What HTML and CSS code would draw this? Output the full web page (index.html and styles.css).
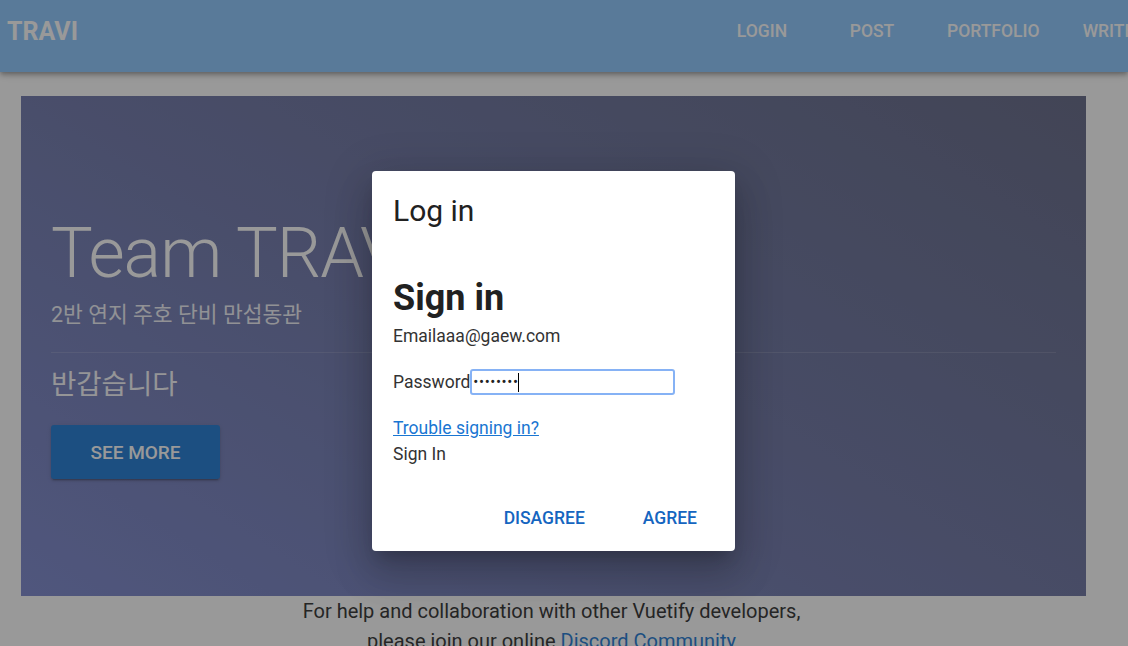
FILE: index.html
```html
<!DOCTYPE html>
<html lang="ko">
<head>
<meta charset="utf-8">
<title>TRAVI</title>
<link rel="stylesheet" href="styles.css">
</head>
<body>
<div class="app">
  <header class="toolbar">
    <div class="toolbar-inner">
      <div class="brand">TRAVI</div>
      <nav class="nav">
        <a class="nav-btn">LOGIN</a>
        <a class="nav-btn">POST</a>
        <a class="nav-btn">PORTFOLIO</a>
        <a class="nav-btn">WRITE</a>
      </nav>
    </div>
  </header>

  <main class="main">
    <section class="hero">
      <h1 class="hero-title">Team TRAVI</h1>
      <div class="hero-sub">2반 연지 주호 단비 만섭동관</div>
      <hr class="hero-divider">
      <div class="hero-greet">반갑습니다</div>
      <button class="hero-btn">SEE MORE</button>
    </section>
    <p class="help">For help and collaboration with other Vuetify developers,<br>please join our online <a class="help-link">Discord Community</a></p>
  </main>

  <div class="overlay"></div>

  <div class="dialog">
    <div class="dialog-title">Log in</div>
    <div class="dialog-body">
      <h2 class="signin">Sign in</h2>
      <div class="field-line">Emailaaa@gaew.com</div>
      <div class="pw-row">
        <span class="pw-label">Password</span>
        <span class="pw-input"><span class="pw-dots">••••••••</span><span class="caret"></span></span>
      </div>
      <a class="trouble">Trouble signing in?</a>
      <div class="field-line">Sign In</div>
    </div>
    <div class="dialog-actions">
      <button class="act-btn">DISAGREE</button>
      <button class="act-btn">AGREE</button>
    </div>
  </div>
</div>
</body>
</html>
```

FILE: styles.css
```css
* { box-sizing: border-box; }
html, body { margin: 0; padding: 0; }
body {
  font-family: Roboto, "Noto Sans CJK KR", "Noto Sans", sans-serif;
  background: #ffffff;
  color: #212121;
  width: 1128px;
  height: 646px;
  overflow: hidden;
}
.app {
  position: relative;
  width: 1128px;
  height: 646px;
  overflow: hidden;
}

/* toolbar */
.toolbar {
  height: 72px;
  background: #8ac6ff;
  box-shadow: 0 2px 4px -1px rgba(0,0,0,.25), 0 4px 5px 0 rgba(0,0,0,.16), 0 1px 10px 0 rgba(0,0,0,.12);
  position: relative;
  z-index: 1;
  overflow: hidden;
}
.toolbar-inner {
  height: 62px;
  display: flex;
  align-items: center;
  padding-left: 7px;
  white-space: nowrap;
}
.brand {
  color: #ffffff;
  font-size: 25px;
  font-weight: 700;
  flex: 0 0 auto;
}
.nav {
  display: flex;
  flex: 0 0 auto;
  margin-left: 628px;
}
.nav-btn {
  min-width: 112px;
  padding: 0 16px;
  text-align: center;
  color: #ffffff;
  font-size: 17.5px;
  font-weight: 500;
  line-height: 36px;
}
.nav-btn:nth-child(2) { margin-left: -2px; }
.nav-btn:nth-child(3) { margin-left: 3px; }
.nav-btn:nth-child(4) { margin-left: -3px; }

/* main */
.main {
  padding: 24px 42px 0 21px;
}
.hero {
  height: 500px;
  padding: 121px 30px 0;
  background: linear-gradient(32deg, #7884cc 0%, #6b74a8 45%, #5f6483 100%);
  color: #ffffff;
}
.hero-title {
  margin: 0;
  font-size: 70px;
  font-weight: 300;
  line-height: 72px;
  letter-spacing: -1px;
}
.hero-sub {
  margin-top: 11px;
  font-size: 21.5px;
  line-height: 30px;
  opacity: .9;
}
.hero-divider {
  margin: 22px 0 0;
  border: 0;
  border-top: 1px solid rgba(255,255,255,.14);
}
.hero-greet {
  margin-top: 13px;
  font-size: 27.5px;
  line-height: 38px;
  opacity: .95;
}
.hero-btn {
  margin-top: 21px;
  width: 169px;
  height: 54px;
  border: 0;
  border-radius: 3px;
  background: #1976d2;
  color: #ffffff;
  font-family: Roboto, sans-serif;
  font-size: 19px;
  font-weight: 500;
  box-shadow: 0 3px 1px -2px rgba(0,0,0,.2), 0 2px 2px 0 rgba(0,0,0,.14), 0 1px 5px 0 rgba(0,0,0,.12);
}
.help {
  margin: 0;
  padding-right: 4px;
  text-align: center;
  font-size: 20px;
  line-height: 30px;
  color: #2a2a2a;
}
.help-link { color: #1976d2; }

/* overlay */
.overlay {
  position: absolute;
  inset: 0;
  background: rgba(33,33,33,.46);
  z-index: 5;
}

/* dialog */
.dialog {
  position: absolute;
  left: 372px;
  top: 171px;
  width: 363px;
  height: 380px;
  background: #ffffff;
  border-radius: 4px;
  z-index: 6;
  box-shadow: 0 11px 15px -7px rgba(0,0,0,.2), 0 24px 38px 3px rgba(0,0,0,.14), 0 9px 46px 8px rgba(0,0,0,.12);
  display: flex;
  flex-direction: column;
}
.dialog-title {
  padding: 22px 21px 0;
  font-size: 30px;
  line-height: 36px;
  color: #212121;
}
.dialog-body {
  padding: 48px 21px 0;
  color: #333333;
}
.signin {
  margin: 0;
  font-size: 36px;
  font-weight: 700;
  line-height: 43px;
  color: #212121;
}
.field-line {
  font-size: 17.5px;
  line-height: 26px;
}
.signin + .field-line { margin-top: 3px; }
.pw-row {
  margin-top: 20px;
  display: flex;
  align-items: center;
  height: 26px;
  font-size: 17.5px;
}
.pw-input {
  width: 205px;
  height: 26px;
  border: 2px solid #86b2f5;
  border-radius: 3px;
  display: flex;
  align-items: center;
  padding-left: 1px;
}
.pw-dots {
  font-size: 15px;
  letter-spacing: 0.6px;
  color: #222;
  line-height: 20px;
}
.caret {
  display: inline-block;
  width: 1px;
  height: 19px;
  background: #000;
  margin-left: -1px;
}
.trouble {
  display: block;
  margin-top: 20px;
  font-size: 17.5px;
  line-height: 26px;
  color: #1976d2;
  text-decoration: underline;
}
.dialog-actions {
  margin-top: auto;
  padding: 0 22px 15px;
  display: flex;
  justify-content: flex-end;
  gap: 26px;
}
.act-btn {
  height: 36px;
  padding: 0 16px;
  border: 0;
  background: transparent;
  color: #1565c0;
  font-family: Roboto, sans-serif;
  font-size: 17.5px;
  font-weight: 500;
}
```
